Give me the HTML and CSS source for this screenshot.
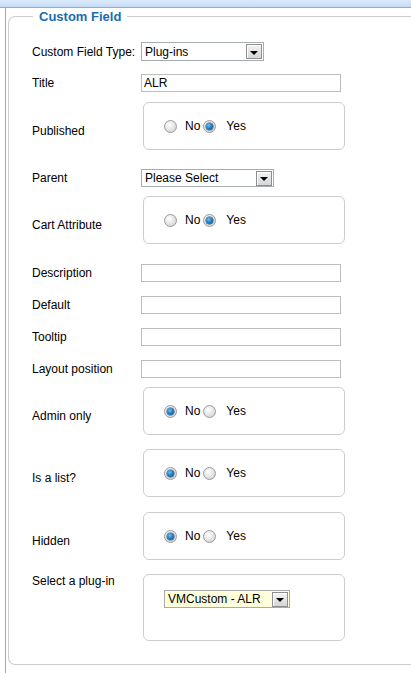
FILE: index.html
```html
<!DOCTYPE html>
<html>
<head>
<meta charset="utf-8">
<title>Custom Field</title>
<link rel="stylesheet" href="styles.css">
</head>
<body>
<div class="topbar"></div>
<div class="frame">
  <fieldset class="panel">
    <legend>Custom Field</legend>
    <div class="form">
      <div class="row first">
        <span class="lbl">Custom Field Type:</span>
        <div class="select sel-type"><span class="val">Plug-ins</span><span class="btn"><i></i></span></div>
      </div>
      <div class="row g13">
        <span class="lbl">Title</span>
        <div class="input">ALR</div>
      </div>
      <div class="row boxrow g10">
        <span class="lbl">Published</span>
        <div class="radiobox">
          <span class="radio"></span><span class="opt">No</span><span class="radio on"></span><span class="opt">Yes</span>
        </div>
      </div>
      <div class="row g19">
        <span class="lbl">Parent</span>
        <div class="select sel-parent"><span class="val">Please Select</span><span class="btn"><i></i></span></div>
      </div>
      <div class="row boxrow g9">
        <span class="lbl">Cart Attribute</span>
        <div class="radiobox">
          <span class="radio"></span><span class="opt">No</span><span class="radio on"></span><span class="opt">Yes</span>
        </div>
      </div>
      <div class="row g20">
        <span class="lbl">Description</span>
        <div class="input"></div>
      </div>
      <div class="row g14">
        <span class="lbl">Default</span>
        <div class="input"></div>
      </div>
      <div class="row g14">
        <span class="lbl">Tooltip</span>
        <div class="input"></div>
      </div>
      <div class="row g14">
        <span class="lbl">Layout position</span>
        <div class="input"></div>
      </div>
      <div class="row boxrow g9">
        <span class="lbl">Admin only</span>
        <div class="radiobox">
          <span class="radio on"></span><span class="opt">No</span><span class="radio"></span><span class="opt">Yes</span>
        </div>
      </div>
      <div class="row boxrow g14">
        <span class="lbl">Is a list?</span>
        <div class="radiobox">
          <span class="radio on"></span><span class="opt">No</span><span class="radio"></span><span class="opt">Yes</span>
        </div>
      </div>
      <div class="row boxrow g15">
        <span class="lbl">Hidden</span>
        <div class="radiobox">
          <span class="radio on"></span><span class="opt">No</span><span class="radio"></span><span class="opt">Yes</span>
        </div>
      </div>
      <div class="row toprow g14">
        <span class="lbl">Select a plug-in</span>
        <div class="pluginbox">
          <div class="select sel-plugin"><span class="val">VMCustom - ALR</span><span class="btn"><i></i></span></div>
        </div>
      </div>
    </div>
  </fieldset>
</div>
</body>
</html>
```
FILE: styles.css
```css
* { box-sizing: border-box; }
html, body { margin: 0; padding: 0; background: #fff; }
body {
  width: 411px;
  height: 673px;
  overflow: hidden;
  font-family: "Liberation Sans", Arial, sans-serif;
  font-size: 12px;
  color: #000;
}
.topbar {
  height: 8px;
  background: linear-gradient(#dcebfb, #c4dbf4);
  border-bottom: 1px solid #a9a9a9;
}
.frame {
  margin-left: 5px;
  border-left: 1px solid #a8a8a8;
  padding-left: 2px;
  padding-top: 1px;
  height: 665px;
}
.panel {
  margin: 0;
  border: 1px solid #cdcdcd;
  border-right: none;
  border-radius: 7px 0 0 7px;
  padding: 18px 0 23px 23px;
  min-inline-size: 0;
}
.panel legend {
  margin-left: 1px;
  padding: 0 6px;
  font-weight: bold;
  font-size: 13px;
  line-height: 15px;
  color: #1c6cb0;
}
.form { display: flex; flex-direction: column; }
.row { display: flex; align-items: center; }
.lbl { width: 109px; flex: none; line-height: 14px; }
.boxrow .lbl { padding-top: 9px; }
.toprow { align-items: flex-start; }
.g9 { margin-top: 9px; }
.g10 { margin-top: 10px; }
.g13 { margin-top: 13px; }
.g14 { margin-top: 14px; }
.g15 { margin-top: 15px; }
.g19 { margin-top: 19px; }
.g20 { margin-top: 20px; }

.input {
  width: 200px;
  height: 18px;
  border: 1px solid #bdbdbd;
  background: #fff;
  padding: 1px 2px;
  line-height: 14px;
}

.select {
  display: flex;
  align-items: center;
  height: 19px;
  border: 1px solid #a5acb2;
  background: #fff;
  line-height: 14px;
}
.select .val { flex: 1; padding-left: 3px; white-space: nowrap; }
.select .btn {
  width: 16px;
  height: 15px;
  margin-right: 1px;
  border: 1px solid #8e8e8e;
  box-shadow: inset 1px 1px 0 #fff;
  background: linear-gradient(#f3f3f3, #d6d6d6);
  display: flex;
  align-items: center;
  justify-content: center;
}
.select .btn i {
  display: block;
  width: 0;
  height: 0;
  border-left: 4px solid transparent;
  border-right: 4px solid transparent;
  border-top: 4px solid #000;
  margin-top: 2px;
}
.sel-type { width: 123px; }
.sel-parent { width: 133px; height: 18px; }
.sel-plugin { width: 126px; height: 18px; background: #ffffdc; border-color: #a9a9a9; }
.sel-plugin .btn { height: 15px; }

.radiobox {
  margin-left: 2px;
  width: 202px;
  height: 48px;
  border: 1px solid #cccccc;
  border-radius: 6px;
  display: flex;
  align-items: center;
  padding-left: 20px;
}
.radio {
  width: 13px;
  height: 13px;
  border-radius: 50%;
  border: 1px solid #9c9c9c;
  background: radial-gradient(circle at 40% 35%, #ffffff 0%, #e8e8e8 45%, #c9c9c9 100%);
  flex: none;
  margin-right: 8px;
  display: flex;
  align-items: center;
  justify-content: center;
}
.radio.on::after {
  content: "";
  width: 7px;
  height: 7px;
  border-radius: 50%;
  background: radial-gradient(circle at 40% 35%, #6fc0ee 0%, #1b7ac4 50%, #0a4c86 100%);
  box-shadow: 0 0 0 0.5px #234d73;
}
.opt { margin-right: 3px; line-height: 14px; }
.opt + .radio { margin-right: 10px; }

.pluginbox {
  margin-left: 2px;
  width: 202px;
  height: 67px;
  border: 1px solid #cccccc;
  border-radius: 6px;
  padding: 15px 0 0 20px;
}
```
